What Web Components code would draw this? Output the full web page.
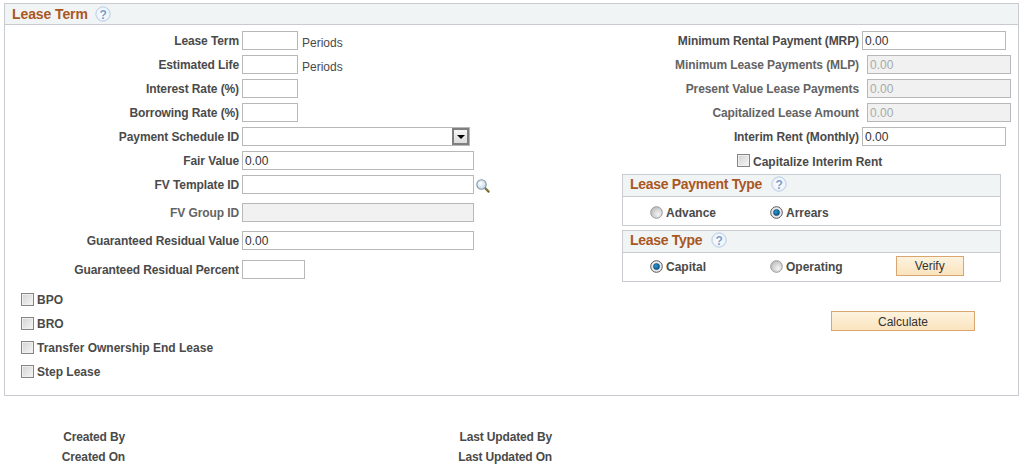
<!DOCTYPE html>
<html>
<head>
<meta charset="utf-8">
<title>Lease Term</title>
<style>
    html, body { margin: 0; background: #fff; }
    body { font: bold 12px "Liberation Sans", Arial, sans-serif; color: #4a4a4a; width: 1024px; height: 465px; overflow: hidden; }
</style>
</head>
<body>
<lease-page>
    <group-box title="Lease Term" slot="main">
        <div slot="left">
            <form-row label="Lease Term"><text-field w="56"></text-field><span class="unit">Periods</span></form-row>
            <form-row label="Estimated Life"><text-field w="56"></text-field><span class="unit">Periods</span></form-row>
            <form-row label="Interest Rate (%)"><text-field w="56"></text-field></form-row>
            <form-row label="Borrowing Rate (%)"><text-field w="56"></text-field></form-row>
            <form-row label="Payment Schedule ID"><drop-down w="228"></drop-down></form-row>
            <form-row label="Fair Value"><text-field w="232" value="0.00"></text-field></form-row>
            <form-row label="FV Template ID"><text-field w="232"></text-field><search-icon></search-icon></form-row>
            <form-row label="FV Group ID" muted top="8"><text-field w="232" disabled></text-field></form-row>
            <form-row label="Guaranteed Residual Value" top="8"><text-field w="232" value="0.00"></text-field></form-row>
            <form-row label="Guaranteed Residual Percent" top="9"><text-field w="63"></text-field></form-row>
            <check-list>
                <check-field>BPO</check-field>
                <check-field>BRO</check-field>
                <check-field>Transfer Ownership End Lease</check-field>
                <check-field>Step Lease</check-field>
            </check-list>
        </div>
        <div slot="right">
            <form-row label="Minimum Rental Payment (MRP)" lw="238"><text-field w="144" value="0.00"></text-field></form-row>
            <form-row label="Minimum Lease Payments (MLP)" lw="238" shift="5" muted><text-field w="144" value="0.00" disabled></text-field></form-row>
            <form-row label="Present Value Lease Payments" lw="238" shift="5" muted><text-field w="144" value="0.00" disabled></text-field></form-row>
            <form-row label="Capitalized Lease Amount" lw="238" shift="5" muted><text-field w="144" value="0.00" disabled></text-field></form-row>
            <form-row label="Interim Rent (Monthly)" lw="238"><text-field w="144" value="0.00"></text-field></form-row>
            <check-field class="cap">Capitalize Interim Rent</check-field>
            <sub-box title="Lease Payment Type">
                <radio-field class="first">Advance</radio-field>
                <radio-field checked>Arrears</radio-field>
            </sub-box>
            <sub-box title="Lease Type" class="second">
                <radio-field class="first" checked>Capital</radio-field>
                <radio-field>Operating</radio-field>
                <ps-button class="verify" w="68">Verify</ps-button>
            </sub-box>
            <ps-button class="calc" w="144">Calculate</ps-button>
        </div>
    </group-box>
    <audit-info slot="footer"></audit-info>
</lease-page>

<script>
// small helper so every element gets an open shadow root with its own styles
function shadow(el, html) {
    el.attachShadow({ mode: 'open' }).innerHTML = html;
}

class LeasePage extends HTMLElement {
    constructor() {
        super();
        shadow(this, `
            <style>
                :host { display: block; padding: 3px 5px 0 4px; }
            </style>
            <slot name="main"></slot>
            <slot name="footer"></slot>
        `);
    }
}

class HelpIcon extends HTMLElement {
    constructor() {
        super();
        shadow(this, `
            <style>
                :host { display: inline-block; width: 16px; height: 16px; }
                svg { display: block; }
                text { font: bold 12px "Liberation Sans", Arial, sans-serif; fill: #7a9ecb; }
            </style>
            <svg width="16" height="16" viewBox="0 0 16 16">
                <defs>
                    <radialGradient id="h" cx="50%" cy="50%" r="55%">
                        <stop offset="0" stop-color="#ffffff"/>
                        <stop offset="0.7" stop-color="#f0f5fa"/>
                        <stop offset="1" stop-color="#d2e0f0"/>
                    </radialGradient>
                </defs>
                <circle cx="8" cy="8" r="7.2" fill="url(#h)" stroke="#bcd0e6" stroke-width="1"/>
                <text x="8" y="12.5" text-anchor="middle">?</text>
            </svg>
        `);
    }
}

class GroupBox extends HTMLElement {
    constructor() {
        super();
        shadow(this, `
            <style>
                :host { display: block; height: 393px; box-sizing: border-box; border: 1px solid #c8ccd0; }
                header { display: flex; align-items: center; gap: 7px; box-sizing: border-box; height: 20px; padding: 0 0 1px 7px; background: #f1f4f5; border-bottom: 0; box-shadow: 0 1px 0 #c8ccd0; font-size: 14px; letter-spacing: -0.1px; color: #a9571f; }
                .cols { display: flex; justify-content: space-between; padding-top: 1px; }
                .l { width: 600px; }
                .r { width: 397px; }
            </style>
            <header><span id="t"></span><help-icon></help-icon></header>
            <div class="cols">
                <div class="l"><slot name="left"></slot></div>
                <div class="r"><slot name="right"></slot></div>
            </div>
        `);
        this.shadowRoot.getElementById('t').textContent = this.getAttribute('title');
        this.removeAttribute('title');
    }
}

class FormRow extends HTMLElement {
    constructor() {
        super();
        const lw = this.getAttribute('lw') || 234;
        const top = this.getAttribute('top') || 4;
        const shift = this.getAttribute('shift') || 0;
        const color = this.hasAttribute('muted') ? '#636363' : '#4a4a4a';
        shadow(this, `
            <style>
                :host { display: flex; height: 20px; margin-top: ${top}px; }
                label { width: ${lw}px; margin-right: 3px; flex: none; text-align: right; color: ${color}; line-height: 20px; letter-spacing: -0.1px; white-space: nowrap; }
                .v { display: flex; margin-left: ${shift}px; align-items: flex-start; font: 12px "Liberation Sans", Arial, sans-serif; color: #4a4a4a; }
                ::slotted(.unit) { margin: 5px 0 0 4px; font-weight: normal; }
            </style>
            <label>${this.getAttribute('label')}</label>
            <div class="v"><slot></slot></div>
        `);
    }
}

class TextField extends HTMLElement {
    constructor() {
        super();
        const off = this.hasAttribute('disabled');
        shadow(this, `
            <style>
                :host { display: block; box-sizing: border-box; width: ${this.getAttribute('w')}px; height: 19px; border: 1px solid #b8b8b8; background: ${off ? '#f1f1f1' : '#fff'}; color: ${off ? '#aaa' : '#333'}; font: 12px/19px "Liberation Sans", Arial, sans-serif; padding-left: 2px; }
            </style>
            <span>${this.getAttribute('value') || ''}</span>
        `);
    }
}

class DropDown extends HTMLElement {
    constructor() {
        super();
        shadow(this, `
            <style>
                :host { display: flex; justify-content: flex-end; box-sizing: border-box; width: ${this.getAttribute('w')}px; height: 19px; border: 1px solid #b8b8b8; background: #fff; }
                .btn { width: 17px; height: 17px; box-sizing: border-box; border: 2px solid #7f7f7f; background: linear-gradient(#f6f6f6, #dcdcdc); display: flex; align-items: center; justify-content: center; }
                .btn::after { content: ""; border: 4px solid transparent; border-top: 4px solid #000; border-bottom: 0; }
            </style>
            <div class="btn"></div>
        `);
    }
}

class SearchIcon extends HTMLElement {
    constructor() {
        super();
        shadow(this, `
            <style>
                :host { display: block; width: 14px; height: 14px; margin: 4px 0 0 2px; }
                svg { display: block; }
            </style>
            <svg width="14" height="14" viewBox="0 0 14 14">
                <defs>
                    <radialGradient id="lens" cx="40%" cy="40%" r="60%">
                        <stop offset="0" stop-color="#ffffff"/>
                        <stop offset="1" stop-color="#c4d8ea"/>
                    </radialGradient>
                </defs>
                <path d="M8.8 8.8l3.8 3.8" stroke="#7d6f33" stroke-width="2.2" stroke-linecap="round"/>
                <circle cx="5.5" cy="5.5" r="4.7" fill="url(#lens)" stroke="#8397a6" stroke-width="1.1"/>
            </svg>
        `);
    }
}

class CheckField extends HTMLElement {
    constructor() {
        super();
        shadow(this, `
            <style>
                :host { display: flex; align-items: center; height: 14px; }
                i { display: block; flex: none; box-sizing: border-box; width: 13px; height: 13px; margin: -2px 3px 0 0; border: 1px solid #858585; background: linear-gradient(135deg, #d2d2d2, #f6f6f6); box-shadow: inset 0 0 0 1px #efefef; }
                span { margin-top: var(--text-top, 0); }
            </style>
            <i></i><span><slot></slot></span>
        `);
    }
}

class CheckList extends HTMLElement {
    constructor() {
        super();
        shadow(this, `
            <style>
                :host { display: flex; flex-direction: column; gap: 10px; padding: 13px 0 0 16px; }
            </style>
            <slot></slot>
        `);
    }
}

class RadioField extends HTMLElement {
    constructor() {
        super();
        const on = this.hasAttribute('checked');
        const dot = on
            ? '<circle cx="6.5" cy="6.5" r="3.1" fill="url(#dot)" stroke="#0a3f66" stroke-width="0.5"/>'
            : '';
        shadow(this, `
            <style>
                :host { display: flex; align-items: center; height: 14px; color: #4a4a4a; }
                svg { display: block; margin: -2px 3px 0 0; }
            </style>
            <svg width="13" height="13" viewBox="0 0 13 13">
                <defs>
                    <radialGradient id="off" cx="65%" cy="65%" r="70%">
                        <stop offset="0" stop-color="#f4f4f4"/>
                        <stop offset="1" stop-color="#bdbdbd"/>
                    </radialGradient>
                    <radialGradient id="dot" cx="40%" cy="40%" r="60%">
                        <stop offset="0" stop-color="#2a9ad6"/>
                        <stop offset="1" stop-color="#0a5688"/>
                    </radialGradient>
                </defs>
                <circle cx="6.5" cy="6.5" r="5.8" fill="${on ? '#ececec' : 'url(#off)'}" stroke="${on ? '#555' : '#999'}" stroke-width="1"/>
                ${dot}
            </svg>
            <span><slot></slot></span>
        `);
    }
}

class SubBox extends HTMLElement {
    constructor() {
        super();
        shadow(this, `
            <style>
                :host { display: block; box-sizing: border-box; width: 379px; height: 52px; border: 1px solid #c8ccd0; }
                header { display: flex; align-items: center; gap: 9px; box-sizing: border-box; height: 22px; padding: 0 0 3px 7px; background: #f1f4f5; border-bottom: 1px solid #c8ccd0; font-size: 14px; letter-spacing: -0.3px; color: #a9571f; }
                .b { display: flex; padding: var(--body-top, 9px) 0 0 27px; }
            </style>
            <header><span id="t"></span><help-icon></help-icon></header>
            <div class="b"><slot></slot></div>
        `);
        this.shadowRoot.getElementById('t').textContent = this.getAttribute('title');
        this.removeAttribute('title');
    }
}

class PsButton extends HTMLElement {
    constructor() {
        super();
        shadow(this, `
            <style>
                :host { display: block; box-sizing: border-box; flex: none; width: ${this.getAttribute('w')}px; height: 20px; border: 1px solid #d9a66f; background: linear-gradient(#fdf3df, #fbe3bd); color: #333; font: 12px/var(--btn-line, 18px) "Liberation Sans", Arial, sans-serif; text-align: center; }
            </style>
            <slot></slot>
        `);
    }
}

class AuditInfo extends HTMLElement {
    constructor() {
        super();
        shadow(this, `
            <style>
                :host { display: grid; grid-template-columns: 121px 427px; grid-auto-rows: 20px; margin-top: 31px; text-align: right; line-height: 20px; letter-spacing: -0.15px; }
            </style>
            <span>Created By</span><span>Last Updated By</span>
            <span>Created On</span><span>Last Updated On</span>
        `);
    }
}

customElements.define('lease-page', LeasePage);
customElements.define('help-icon', HelpIcon);
customElements.define('group-box', GroupBox);
customElements.define('form-row', FormRow);
customElements.define('text-field', TextField);
customElements.define('drop-down', DropDown);
customElements.define('search-icon', SearchIcon);
customElements.define('check-field', CheckField);
customElements.define('check-list', CheckList);
customElements.define('radio-field', RadioField);
customElements.define('sub-box', SubBox);
customElements.define('ps-button', PsButton);
customElements.define('audit-info', AuditInfo);
</script>
<style>
    [slot="left"] { padding-top: 2px; }
    [slot="right"] { padding-top: 2px; }
    check-field.cap { margin: 7px 0 0 116px; --text-top: 2px; }
    sub-box { margin: 6px 0 0 1px; }
    sub-box.second { margin-top: 4px; --body-top: 7px; }
    radio-field.first { width: 120px; }
    ps-button.verify { margin: -4px 0 0 53px; }
    ps-button.calc { margin: 29px 0 0 210px; --btn-line: 20px; }
</style>
</body>
</html>
